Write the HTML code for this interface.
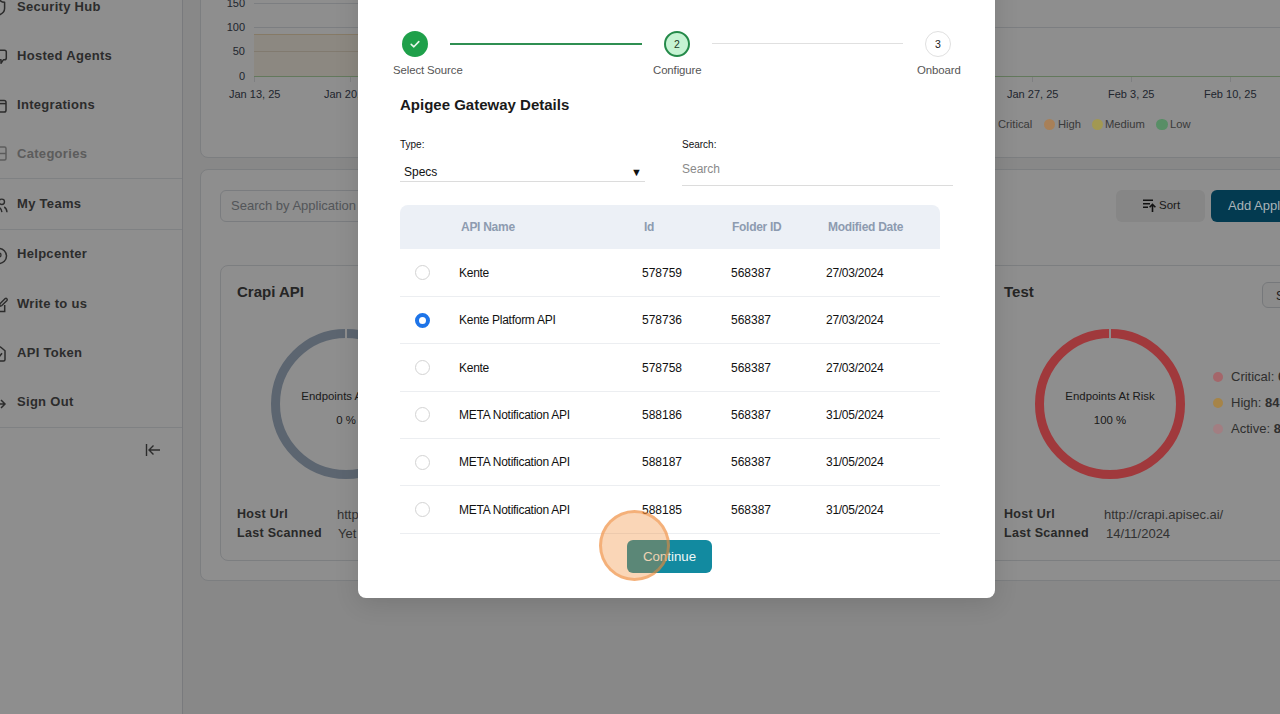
<!DOCTYPE html>
<html><head><meta charset="utf-8">
<style>
*{box-sizing:border-box;margin:0;padding:0}
html,body{width:1280px;height:714px;overflow:hidden;font-family:"Liberation Sans",sans-serif;background:#f4f4f4;position:relative}
.abs{position:absolute}
#side{position:absolute;left:0;top:0;width:183px;height:714px;background:#fff;border-right:1px solid #d9dce1}
.mi{position:absolute;left:17px;font-size:13px;font-weight:bold;color:#505050;letter-spacing:0.3px;white-space:nowrap;line-height:16px}
.sep{position:absolute;left:0;width:182px;height:1px;background:#e5e7eb}
.card{position:absolute;background:#fff;border:1px solid #dfe2e6;border-radius:10px}
#ov{position:absolute;left:0;top:0;width:1280px;height:714px;background:rgba(0,0,0,0.443);z-index:1}
#modal{z-index:3;position:absolute;left:358px;top:-40px;width:637px;height:638px;background:#fff;border-radius:8px;box-shadow:0 6px 24px rgba(0,0,0,0.12)}
.t{position:absolute;white-space:nowrap}
.lab{font-size:11.4px;letter-spacing:-0.1px;color:#555;line-height:14px}
.th{font-size:12px;letter-spacing:-0.28px;font-weight:bold;color:#8d9bb0;line-height:14px}
.td{font-size:12px;color:#111;line-height:14px}
.nm{letter-spacing:-0.27px}
.radio{width:15px;height:15px;border-radius:50%;border:1px solid #d3d3d3;background:#fff}
.radio.sel{border:4.6px solid #1e74e8}
.yl{left:205px;width:40px;text-align:right;font-size:11px;line-height:14px;color:#3b4554}
.xl{top:87px;font-size:11px;line-height:14px;color:#3b4554}
.lg{top:117px;font-size:11.2px;line-height:14px;color:#6a6a6a}
.dot{z-index:2;top:118.5px;width:11.5px;height:11.5px;border-radius:50%}
.dot2{z-index:2;width:10px;height:10px;border-radius:50%}
.donut{z-index:2;width:150px;height:150px;border-radius:50%;border:9.5px solid}
.ep{text-align:center;font-size:11.4px;line-height:14px;color:#333}
.hk{margin-top:1px;font-size:12.5px;font-weight:bold;letter-spacing:0.3px;line-height:15px;color:#4a4a4a}
.hv{margin-top:1px;font-size:13px;line-height:15px;color:#5a5a5a}
.lv{font-size:13px;line-height:16px;color:#555}
</style></head><body>
<div id="side">
  <div class="mi" style="top:-1px">Security Hub</div>
  <div class="mi" style="top:48px">Hosted Agents</div>
  <div class="mi" style="top:97px">Integrations</div>
  <div class="mi" style="top:146px;color:#a6a6a6">Categories</div>
  <div class="sep" style="top:178px"></div>
  <div class="mi" style="top:196px">My Teams</div>
  <div class="sep" style="top:229px"></div>
  <div class="mi" style="top:246px">Helpcenter</div>
  <div class="mi" style="top:296px">Write to us</div>
  <div class="mi" style="top:345px">API Token</div>
  <div class="mi" style="top:394px">Sign Out</div>
  <div class="sep" style="top:427px"></div>
  <svg class="abs" style="left:-10px;top:0px" width="18" height="18" viewBox="0 0 18 18"><path d="M4 2.3C7 2.3 8.5 1.5 9.8 0.2C11 1.5 12 2.3 14.6 2.3V8.5C14.6 11.5 12.5 13.5 9.5 14.8C6.5 13.5 4 11.5 4 8.5Z" fill="none" stroke="#505050" stroke-width="1.5" stroke-linejoin="round"/></svg>
  <svg class="abs" style="left:-10px;top:48px" width="18" height="18" viewBox="0 0 18 18"><path d="M4 2.3H14.5A1.8 1.8 0 0 1 16.3 4.1V10A1.8 1.8 0 0 1 14.5 11.8H13.3L11 15.3V11.8H4" fill="none" stroke="#505050" stroke-width="1.5" stroke-linejoin="round"/></svg>
  <svg class="abs" style="left:-10px;top:98.5px" width="18" height="16" viewBox="0 0 18 16"><rect x="1" y="1.5" width="15" height="11.5" rx="1.8" fill="none" stroke="#505050" stroke-width="1.5"/><path d="M1 4.6H16" stroke="#505050" stroke-width="1.5"/></svg>
  <svg class="abs" style="left:-10px;top:146px" width="18" height="16" viewBox="0 0 18 16"><rect x="1" y="1" width="15" height="13" rx="1.5" fill="none" stroke="#a6a6a6" stroke-width="1.5"/><path d="M1 7.5H16" stroke="#a6a6a6" stroke-width="1.5"/></svg>
  <svg class="abs" style="left:-10px;top:196px" width="18" height="18" viewBox="0 0 18 18"><circle cx="11.8" cy="5.8" r="2.7" fill="none" stroke="#505050" stroke-width="1.4"/><path d="M8.5 11C10.5 11.8 11.6 13.6 11.9 16.2" fill="none" stroke="#505050" stroke-width="1.4"/><path d="M14.2 11C16 11.9 16.8 13.8 17 16.2" fill="none" stroke="#505050" stroke-width="1.4"/></svg>
  <svg class="abs" style="left:-10px;top:246.5px" width="18" height="18" viewBox="0 0 18 18"><circle cx="9" cy="9" r="7.5" fill="none" stroke="#505050" stroke-width="1.5"/><circle cx="9" cy="8" r="2" fill="none" stroke="#505050" stroke-width="1.3"/></svg>
  <svg class="abs" style="left:-10px;top:295px" width="18" height="18" viewBox="0 0 18 18"><path d="M8 4H2V16.5H14.7V10" fill="none" stroke="#505050" stroke-width="1.5"/><path d="M9.5 11.3L10 8.8L15.2 3.6A1.3 1.3 0 0 1 17 5.4L11.8 10.6Z" fill="none" stroke="#505050" stroke-width="1.4" stroke-linejoin="round"/></svg>
  <svg class="abs" style="left:-10px;top:345px" width="18" height="18" viewBox="0 0 18 18"><path d="M2 3.5A1.5 1.5 0 0 1 3.5 2H10.5L15 5.8V14.5A1.5 1.5 0 0 1 13.5 16H3.5A1.5 1.5 0 0 1 2 14.5Z" fill="none" stroke="#505050" stroke-width="1.5" stroke-linejoin="round"/><path d="M7 10L9.3 11.5L12 8.3" fill="none" stroke="#505050" stroke-width="1.6"/></svg>
  <svg class="abs" style="left:-11px;top:394.5px" width="18" height="18" viewBox="0 0 18 18"><path d="M2 9H16M12 5L16 9L12 13" fill="none" stroke="#505050" stroke-width="1.5"/></svg>
  <svg class="abs" style="left:145px;top:443px" width="16" height="14" viewBox="0 0 16 14"><path d="M1.5 1V13M15 7H4M8.5 2.5L4 7L8.5 11.5" fill="none" stroke="#505050" stroke-width="1.4"/></svg>

</div>
<div class="card" style="left:200px;top:-20px;width:1100px;height:178px;border-radius:8px">
</div>
<!-- chart -->
<div class="t yl" style="top:-4px">150</div>
<div class="t yl" style="top:20px">100</div>
<div class="t yl" style="top:44px">50</div>
<div class="t yl" style="top:69px">0</div>
<div class="abs" style="left:254px;top:3px;width:110px;height:1px;background:#dfe3e8"></div>
<div class="abs" style="left:254px;top:27px;width:1026px;height:1px;background:#dfe3e8"></div>
<div class="abs" style="left:254px;top:35px;width:110px;height:41px;background:#fcf5e8"></div>
<div class="abs" style="left:254px;top:34px;width:110px;height:1px;background:#f0dcb8"></div>
<div class="abs" style="left:254px;top:51px;width:110px;height:1px;background:#e8dcc8"></div>
<div class="abs" style="left:254px;top:75.5px;width:1026px;height:1.5px;background:#b3d9a6"></div>
<div class="abs" style="left:254px;top:77px;width:1px;height:5px;background:#e3e5e8"></div>
<div class="abs" style="left:350px;top:77px;width:1px;height:5px;background:#e3e5e8"></div>
<div class="abs" style="left:1032px;top:77px;width:1px;height:5px;background:#e3e5e8"></div>
<div class="abs" style="left:1131px;top:77px;width:1px;height:5px;background:#e3e5e8"></div>
<div class="abs" style="left:1230px;top:77px;width:1px;height:5px;background:#e3e5e8"></div>
<div class="t xl" style="left:229px">Jan 13, 25</div>
<div class="t xl" style="left:324px">Jan 20, 25</div>
<div class="t xl" style="left:1007px">Jan 27, 25</div>
<div class="t xl" style="left:1108px">Feb 3, 25</div>
<div class="t xl" style="left:1204px">Feb 10, 25</div>
<div class="t lg" style="left:998px">Critical</div>
<div class="abs dot" style="left:1043.5px;background:rgb(168,128,88)"></div>
<div class="t lg" style="left:1058px">High</div>
<div class="abs dot" style="left:1091.5px;background:rgb(162,152,82)"></div>
<div class="t lg" style="left:1105px">Medium</div>
<div class="abs dot" style="left:1156px;background:rgb(88,142,102)"></div>
<div class="t lg" style="left:1170px">Low</div>

<div class="card" style="left:200px;top:169px;width:1100px;height:412px;border-radius:8px"></div>
<div class="abs" style="left:220px;top:190px;width:200px;height:32px;border:1px solid #dcdfe4;border-radius:6px;background:#fff"></div>
<div class="t" style="left:231px;top:198px;font-size:13px;line-height:15px;color:#959aa1">Search by Application Name</div>
<div class="abs" style="left:1116px;top:190px;width:89px;height:32px;border-radius:6px;background:#f0f0f0"></div>
<svg class="abs" style="left:1142px;top:198px" width="15" height="15" viewBox="0 0 15 15"><path d="M1 2.3H11M1 5.8H8M1 9.3H6" stroke="#222" stroke-width="1.6" fill="none"/><path d="M10.5 14V6.5M7.6 9.2L10.5 6.3L13.4 9.2" stroke="#222" stroke-width="1.6" fill="none"/></svg>
<div class="t" style="left:1159px;top:198px;font-size:11.5px;line-height:15px;color:#333">Sort</div>
<div class="abs" style="left:1211px;top:190px;width:120px;height:32px;border-radius:6px;background:rgb(3,58,80);z-index:2"></div>
<div class="t" style="z-index:2;left:1228px;top:198px;font-size:13px;line-height:16px;color:#a9b4b9">Add Application</div>

<div class="card" style="left:220px;top:265px;width:400px;height:296px;border-radius:8px"></div>
<div class="t" style="left:237px;top:283px;font-size:15px;font-weight:bold;line-height:18px;color:#444">Crapi API</div>
<div class="abs donut" style="left:271px;top:329px;border-color:rgb(92,101,112)"></div>
<div class="abs" style="z-index:2;left:345px;top:328px;width:2px;height:12px;background:#8e8e8e"></div>
<div class="t ep" style="left:296px;top:389px;width:100px">Endpoints At Risk</div>
<div class="t ep" style="left:296px;top:413px;width:100px">0 %</div>
<div class="t hk" style="left:237px;top:506px">Host Url</div>
<div class="t hk" style="left:237px;top:525px">Last Scanned</div>
<div class="t hv" style="left:337px;top:506px">http://crapi.apisec.ai/</div>
<div class="t hv" style="left:338px;top:525px">Yet to scan</div>

<div class="card" style="left:960px;top:265px;width:400px;height:296px;border-radius:8px"></div>
<div class="t" style="left:1004px;top:283px;font-size:15px;font-weight:bold;line-height:18px;color:#444">Test</div>
<div class="abs" style="left:1262px;top:282px;width:60px;height:26px;border:1px solid #d5d8dd;border-radius:6px;background:#fafafa"></div>
<div class="t" style="left:1276px;top:289px;font-size:12px;line-height:14px;color:#333">Scan</div>
<div class="abs donut" style="left:1035px;top:329px;border-color:rgb(160,57,60)"></div>
<div class="abs" style="z-index:2;left:1109px;top:328px;width:2px;height:12px;background:#8e8e8e"></div>
<div class="t ep" style="left:1060px;top:389px;width:100px">Endpoints At Risk</div>
<div class="t ep" style="left:1060px;top:413px;width:100px">100 %</div>
<div class="abs dot2" style="left:1213px;top:372px;background:rgb(164,102,106)"></div>
<div class="abs dot2" style="left:1213px;top:398px;background:rgb(166,132,72)"></div>
<div class="abs dot2" style="left:1213px;top:424px;background:rgb(162,126,130)"></div>
<div class="t lv" style="left:1231px;top:369px">Critical: <b>0</b></div>
<div class="t lv" style="left:1231px;top:395px">High: <b>84</b></div>
<div class="t lv" style="left:1231px;top:421px">Active: <b>84</b></div>
<div class="t hk" style="left:1004px;top:506px">Host Url</div>
<div class="t hk" style="left:1004px;top:525px">Last Scanned</div>
<div class="t hv" style="left:1104px;top:506px">http://crapi.apisec.ai/</div>
<div class="t hv" style="left:1106px;top:525px">14/11/2024</div>

<div id="ov"></div>
<div id="modal">
 <div id="mc" style="position:absolute;left:0;top:40px;width:637px;height:598px">
  <!-- stepper -->
  <div class="abs" style="left:44px;top:30.5px;width:26px;height:26px;border-radius:50%;background:#1fa04a"></div>
  <svg class="abs" style="left:50px;top:36.5px" width="14" height="14" viewBox="0 0 14 14"><path d="M3.2 7.3 L5.9 9.8 L10.8 4.6" fill="none" stroke="#e8f8ec" stroke-width="1.6" stroke-linecap="round" stroke-linejoin="round"/></svg>
  <div class="abs" style="left:92px;top:42.5px;width:192px;height:2px;background:#2f8f52"></div>
  <div class="abs" style="left:306px;top:30.5px;width:26px;height:26px;border-radius:50%;background:#c6f3d3;border:2px solid #258a4a"></div>
  <div class="t" style="left:306px;top:37px;width:26px;text-align:center;font-size:10.5px;line-height:14px;color:#1d3a28">2</div>
  <div class="abs" style="left:354px;top:42.5px;width:191px;height:1.5px;background:#e0e0e0"></div>
  <div class="abs" style="left:567px;top:30.5px;width:26px;height:26px;border-radius:50%;background:#fff;border:1.5px solid #e0e0e0"></div>
  <div class="t" style="left:567px;top:37px;width:26px;text-align:center;font-size:10.5px;line-height:14px;color:#222">3</div>
  <div class="t lab" style="left:35px;top:63px">Select Source</div>
  <div class="t lab" style="left:295px;top:63px">Configure</div>
  <div class="t lab" style="left:559px;top:63px">Onboard</div>
  <div class="t" style="left:42px;top:96px;font-size:15px;font-weight:bold;color:#1a1a1a;line-height:18px">Apigee Gateway Details</div>
  <div class="t" style="left:42px;top:139px;font-size:10px;color:#111;line-height:12px">Type:</div>
  <div class="t" style="left:46px;top:165px;font-size:12px;color:#111;line-height:14px">Specs</div>
  <div class="t" style="left:273px;top:165px;font-size:11px;color:#111;line-height:14px">&#9660;</div>
  <div class="abs" style="left:42px;top:181px;width:245px;height:1px;background:#dcdcdc"></div>
  <div class="t" style="left:324px;top:139px;font-size:10px;color:#111;line-height:12px">Search:</div>
  <div class="t" style="left:324px;top:162px;font-size:12px;color:#8a8a8a;line-height:14px">Search</div>
  <div class="abs" style="left:324px;top:185px;width:271px;height:1px;background:#dcdcdc"></div>
  <!-- table -->
  <div class="abs" style="left:42px;top:205px;width:540px;height:43.5px;background:#ecf0f6;border-radius:8px 8px 0 0"></div>
  <div class="t th" style="left:103px;top:220px">API Name</div>
  <div class="t th" style="left:286px;top:220px">Id</div>
  <div class="t th" style="left:374px;top:220px">Folder ID</div>
  <div class="t th" style="left:470px;top:220px">Modified Date</div>
  <div class="abs radio" style="left:57px;top:265px"></div>
  <div class="t td nm" style="left:101px;top:266px">Kente</div>
  <div class="t td" style="left:284px;top:266px">578759</div>
  <div class="t td" style="left:373px;top:266px">568387</div>
  <div class="t td nm" style="left:468px;top:266px">27/03/2024</div>
  <div class="abs" style="left:42px;top:296px;width:540px;height:1px;background:#eceef1"></div>
  <div class="abs radio sel" style="left:57px;top:313px"></div>
  <div class="t td nm" style="left:101px;top:313px">Kente Platform API</div>
  <div class="t td" style="left:284px;top:313px">578736</div>
  <div class="t td" style="left:373px;top:313px">568387</div>
  <div class="t td nm" style="left:468px;top:313px">27/03/2024</div>
  <div class="abs" style="left:42px;top:343px;width:540px;height:1px;background:#eceef1"></div>
  <div class="abs radio" style="left:57px;top:360px"></div>
  <div class="t td nm" style="left:101px;top:361px">Kente</div>
  <div class="t td" style="left:284px;top:361px">578758</div>
  <div class="t td" style="left:373px;top:361px">568387</div>
  <div class="t td nm" style="left:468px;top:361px">27/03/2024</div>
  <div class="abs" style="left:42px;top:391px;width:540px;height:1px;background:#eceef1"></div>
  <div class="abs radio" style="left:57px;top:407px"></div>
  <div class="t td nm" style="left:101px;top:408px">META Notification API</div>
  <div class="t td" style="left:284px;top:408px">588186</div>
  <div class="t td" style="left:373px;top:408px">568387</div>
  <div class="t td nm" style="left:468px;top:408px">31/05/2024</div>
  <div class="abs" style="left:42px;top:438px;width:540px;height:1px;background:#eceef1"></div>
  <div class="abs radio" style="left:57px;top:455px"></div>
  <div class="t td nm" style="left:101px;top:455px">META Notification API</div>
  <div class="t td" style="left:284px;top:455px">588187</div>
  <div class="t td" style="left:373px;top:455px">568387</div>
  <div class="t td nm" style="left:468px;top:455px">31/05/2024</div>
  <div class="abs" style="left:42px;top:485px;width:540px;height:1px;background:#eceef1"></div>
  <div class="abs radio" style="left:57px;top:502px"></div>
  <div class="t td nm" style="left:101px;top:503px">META Notification API</div>
  <div class="t td" style="left:284px;top:503px">588185</div>
  <div class="t td" style="left:373px;top:503px">568387</div>
  <div class="t td nm" style="left:468px;top:503px">31/05/2024</div>
  <div class="abs" style="left:42px;top:533px;width:540px;height:1px;background:#eceef1"></div>
  <div class="abs" style="left:269px;top:540px;width:85px;height:33px;border-radius:6px;background:#128aa0"></div>
  <div class="t" style="left:269px;top:549px;width:85px;text-align:center;font-size:13.3px;line-height:16px;color:#eef8f8">Continue</div>
 </div>
</div>
<div class="abs" style="z-index:4;left:599px;top:510px;width:71px;height:71px;border-radius:50%;background:rgba(240,132,37,0.33);border:3px solid rgba(240,140,60,0.5)"></div>
</body></html>
